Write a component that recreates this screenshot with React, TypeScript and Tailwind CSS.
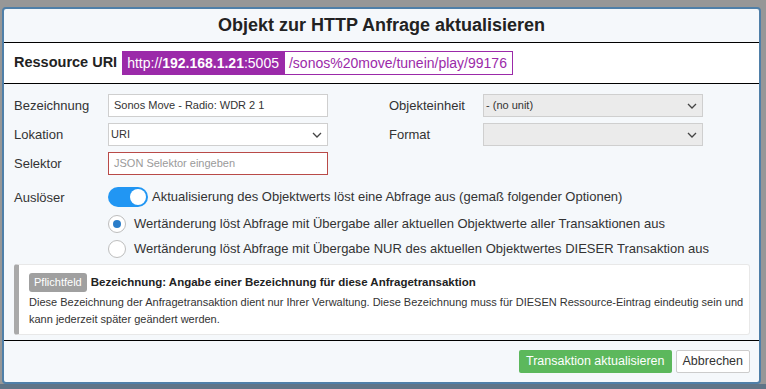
import React from "react";

function Select({ value, gray }: { value: string; gray?: boolean }) {
  return (
    <div
      className={`flex h-[23px] w-[220px] items-center justify-between border border-[#cfcfcf] pl-[2px] pr-[5px] text-[11px] text-[#333] ${
        gray ? "bg-[#ebebeb]" : "bg-white"
      }`}
    >
      <span>{value}</span>
      <svg width="10" height="6" viewBox="0 0 10 6" fill="none" stroke="#444" strokeWidth="1.3">
        <path d="M1 1l4 4 4-4" />
      </svg>
    </div>
  );
}

function Radio({ checked, label }: { checked?: boolean; label: string }) {
  return (
    <div className="flex h-[25px] items-center gap-[8px]">
      <span className="flex h-[18px] w-[18px] items-center justify-center rounded-full border border-[#bdbdbd] bg-white">
        {checked && <span className="h-[8px] w-[8px] rounded-full bg-[#2a7dc9]" />}
      </span>
      <span>{label}</span>
    </div>
  );
}

export default function App() {
  return (
    <div className="flex h-[389px] w-[766px] flex-col bg-[#979797] font-['Liberation_Sans',Arial,sans-serif] text-[#333]">
      <div className="pl-[2px] pr-[5px] pt-[7px]">
        <div className="flex h-[377px] flex-col overflow-hidden rounded-[4px] border-2 border-[#4f7fa8] bg-[#f5f8fb]">
          <div className="flex h-[34px] shrink-0 items-center justify-center border-b border-black text-[18px] font-bold text-[#222]">
            Objekt zur HTTP Anfrage aktualisieren
          </div>

          <div className="flex h-[41px] shrink-0 items-center border-b border-black bg-white pl-[10px]">
            <span className="text-[14.5px] font-bold text-[#222]">Ressource URI</span>
            <div className="ml-[5px] flex h-[24px] items-stretch text-[14px]">
              <span className="flex items-center bg-[#9b2aa9] px-[5px] text-white">
                http://<b>192.168.1.21</b>:5005
              </span>
              <span className="flex items-center border border-[#9b2aa9] bg-white pl-[4px] pr-[5px] text-[#9b2aa9]">
                /sonos%20move/tunein/play/99176
              </span>
            </div>
          </div>

          <div className="flex-1 pl-[10px] pt-[10px] text-[13px]">
            <div className="flex">
              <div className="flex w-[375px] flex-col gap-[6px]">
                <div className="flex items-center">
                  <span className="w-[94px]">Bezeichnung</span>
                  <div className="flex h-[23px] w-[220px] items-center border border-[#cfcfcf] bg-white pl-[5px] text-[11px]">
                    Sonos Move - Radio: WDR 2 1
                  </div>
                </div>
                <div className="flex items-center">
                  <span className="w-[94px]">Lokation</span>
                  <Select value="URI" />
                </div>
                <div className="flex items-center">
                  <span className="w-[94px]">Selektor</span>
                  <div className="flex h-[23px] w-[220px] items-center border border-[#b94a48] bg-white pl-[5px] text-[11px] text-[#9a9a9a]">
                    JSON Selektor eingeben
                  </div>
                </div>
              </div>
              <div className="flex flex-col gap-[6px]">
                <div className="flex items-center">
                  <span className="w-[94px]">Objekteinheit</span>
                  <Select value="- (no unit)" gray />
                </div>
                <div className="flex items-center">
                  <span className="w-[94px]">Format</span>
                  <Select value="" gray />
                </div>
              </div>
            </div>

            <div className="mt-[10px] flex">
              <span className="w-[94px] pt-[3px]">Auslöser</span>
              <div className="flex flex-col">
                <div className="flex h-[24px] items-center gap-[4px]">
                  <span className="flex h-[20px] w-[40px] items-center justify-end rounded-full bg-[#2196f3] pr-[2px]">
                    <span className="h-[16px] w-[16px] rounded-full bg-white" />
                  </span>
                  <span>Aktualisierung des Objektwerts löst eine Abfrage aus (gemaß folgender Optionen)</span>
                </div>
                <div className="mt-[2px]">
                  <Radio checked label="Wertänderung löst Abfrage mit Übergabe aller aktuellen Objektwerte aller Transaktionen aus" />
                  <Radio label="Wertänderung löst Abfrage mit Übergabe NUR des aktuellen Objektwertes DIESER Transaktion aus" />
                </div>
              </div>
            </div>

            <div className="mr-[9px] mt-[3px] rounded-[3px] border border-[#e8e8e8] border-l-[5px] border-l-[#a9a9a9] bg-white pb-[6px] pl-[10px] pr-[2px] pt-[8px] text-[11px]">
              <div className="flex items-center">
                <span className="rounded-[3px] bg-[#a0a0a0] px-[5px] py-[1px] text-[11px] text-white">Pflichtfeld</span>
                <span className="ml-[4px] text-[11.5px] font-bold text-[#222]">
                  Bezeichnung: Angabe einer Bezeichnung für diese Anfragetransaktion
                </span>
              </div>
              <p className="mt-[2px] leading-[17px]">
                Diese Bezeichnung der Anfragetransaktion dient nur Ihrer Verwaltung. Diese Bezeichnung muss für DIESEN
                Ressource-Eintrag eindeutig sein und kann jederzeit später geändert werden.
              </p>
            </div>
          </div>

          <div className="flex h-[42px] shrink-0 items-center justify-end gap-[4px] border-t border-black pr-[9px] text-[12.5px]">
            <button className="h-[23px] rounded-[2px] bg-[#5cb85c] px-[7px] text-white">Transaktion aktualisieren</button>
            <button className="h-[23px] rounded-[2px] border border-[#ccc] bg-white px-[6px] text-[#333]">Abbrechen</button>
          </div>
        </div>
      </div>
      <div className="flex-1 bg-[#5f7487]" />
    </div>
  );
}
